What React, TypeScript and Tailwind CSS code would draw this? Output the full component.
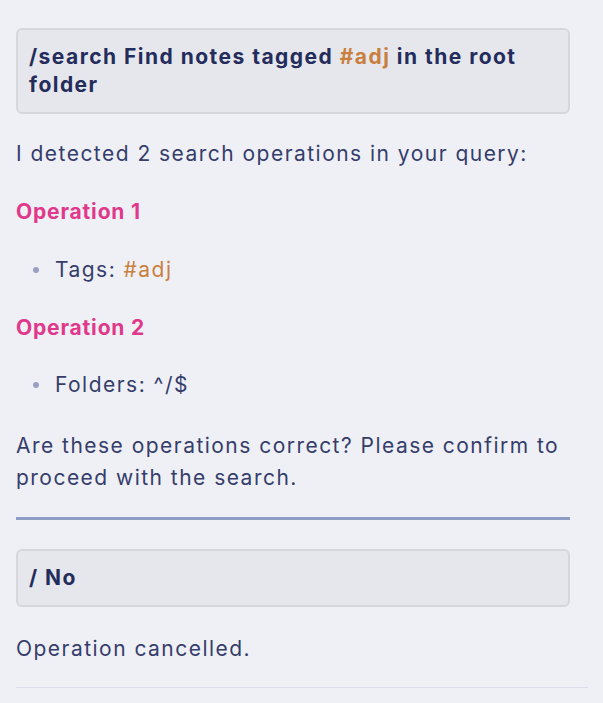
import React from 'react';

const font = { fontFamily: 'Inter, "Noto Sans", sans-serif' };

function CommandBox({ children }: { children: React.ReactNode }) {
  return (
    <div className="rounded-md border-2 border-[#d6d7dd] bg-[#e6e7ec] px-[11px] pt-[13px] pb-[13px] text-[21px] font-bold leading-[28px] tracking-[0.07em] text-[#242c5c]">
      {children}
    </div>
  );
}

function Bullet({ children }: { children: React.ReactNode }) {
  return (
    <div className="flex items-center pl-[17px]">
      <span className="mr-[16px] h-[6px] w-[6px] rounded-full bg-[#9aa0c4]" />
      <span>{children}</span>
    </div>
  );
}

export default function App() {
  return (
    <div className="min-h-screen bg-[#eff0f5] px-4 pt-[28px]" style={font}>
      <div className="w-[572px] border-b border-[#dcdde8] pb-[22px]">
        <div className="flex w-[554px] flex-col text-[21px] leading-[32px] tracking-[0.07em] text-[#353d6b]">
          <CommandBox>
            /search Find notes tagged <span className="text-[#c97f3f]">#adj</span> in the root folder
          </CommandBox>

          <p className="mt-[24px]">I detected 2 search operations in your query:</p>

          <h3 className="mt-[26px] font-bold tracking-[0.04em] text-[#e0388a]">Operation 1</h3>
          <div className="mt-[26px]">
            <Bullet>
              Tags: <span className="text-[#c97f3f]">#adj</span>
            </Bullet>
          </div>

          <h3 className="mt-[26px] font-bold tracking-[0.04em] text-[#e0388a]">Operation 2</h3>
          <div className="mt-[25px]">
            <Bullet>Folders: ^/$</Bullet>
          </div>

          <p className="mt-[29px]">
            Are these operations correct? Please confirm to proceed with the search.
          </p>

          <hr className="mt-[23px] h-[3px] border-0 bg-[#8e9bc4]" />

          <div className="mt-[29px]">
            <CommandBox>/ No</CommandBox>
          </div>

          <p className="mt-[26px]">Operation cancelled.</p>
        </div>
      </div>
    </div>
  );
}
